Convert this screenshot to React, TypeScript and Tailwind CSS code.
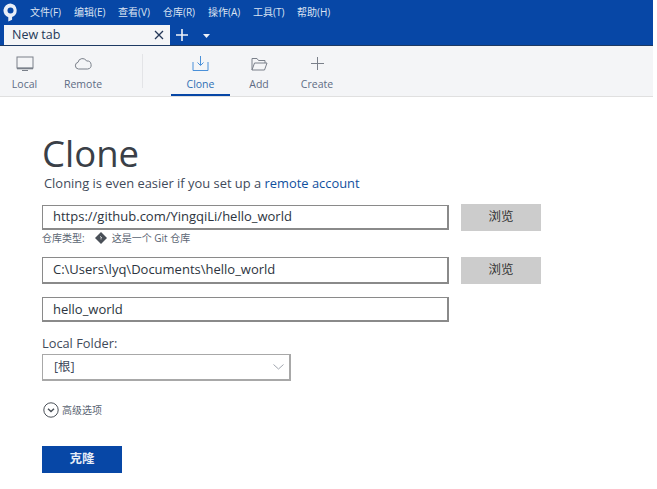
import React from "react";

const cjk = "font-['Open_Sans','Noto_Sans_CJK_SC',sans-serif]";
const menus = [
  ["文件(F)", "w-[44px]"],
  ["编辑(E)", "w-[44px]"],
  ["查看(V)", "w-[45px]"],
  ["仓库(R)", "w-[45px]"],
  ["操作(A)", "w-[45px]"],
  ["工具(T)", "w-[44px]"],
  ["帮助(H)", "w-[40px]"],
];

function ToolItem({ label, icon, w, active }: { label: string; icon: React.ReactNode; w: string; active?: boolean }) {
  return (
    <div className={`${w} h-[50px] flex flex-col items-center relative pt-[7px] ${active ? "border-b-2 border-[#0747a6]" : ""}`}>
      <div className="h-[21px] flex items-center justify-center">{icon}</div>
      <div className={`text-[10.5px] leading-[14px] mt-[3px] ${active ? "text-[#2f6fb5]" : "text-[#5e6c84]"}`}>{label}</div>
    </div>
  );
}

function Field({ value, h, extra }: { value: string; h: string; extra?: string }) {
  return (
    <div className={`w-[407px] ${h} ${extra ?? ""} border border-[#8a8a8a] border-b-2 border-r-2 bg-white flex items-center pl-[10px] text-[13px] text-[#2c3440]`}>
      {value}
    </div>
  );
}

function Browse() {
  return (
    <div className="w-[80px] h-[27px] bg-[#cccccc] flex items-center justify-center text-[12.5px] text-[#333333]">浏览</div>
  );
}

export default function App() {
  return (
    <div className={`w-[653px] h-[489px] bg-white ${cjk} overflow-hidden`}>
      <div className="h-[46px] bg-[#0747a6] flex flex-col border-b border-[#1d3a63]">
        <div className="h-[26px] flex items-center">
          <div className="w-[30px] flex justify-center pr-[9px] pb-[1px]">
            <svg width="15" height="19" viewBox="0 0 15 19" className="shrink-0">
              <path d="M7.500 0.500a7 7 0 0 0-2.200 13.650V18.500l3.800-1.700v-2.800A7 7 0 0 0 7.500 0.500z" fill="#e8eef7" />
              <circle cx="7.500" cy="7.500" r="3" fill="#0747a6" />
            </svg>
          </div>
          {menus.map(([m, w]) => (
            <div key={m} className={`${w} text-[10px] text-[#dbe4f2] whitespace-nowrap`}>{m}</div>
          ))}
        </div>
        <div className="h-[20px] flex items-end">
          <div className="ml-[4px] w-[166px] h-[20px] bg-[#f4f5f7] flex items-center justify-between pl-[8px] pr-[6px] text-[12.5px] text-[#253858]">
            <span>New tab</span>
            <svg width="10" height="10" viewBox="0 0 10 10" stroke="#253858" strokeWidth="1.3"><path d="M1 1l8 8M9 1l-8 8" /></svg>
          </div>
          <div className="w-[24px] h-[20px] flex items-center justify-center">
            <svg width="12" height="12" viewBox="0 0 12 12" stroke="#eef2f8" strokeWidth="1.6"><path d="M6 0v12M0 6h12" /></svg>
          </div>
          <div className="w-[24px] h-[20px] flex items-center justify-center pt-[2px]">
            <svg width="7" height="4" viewBox="0 0 7 4" fill="#eef2f8"><path d="M0 0h7L3.500 4z" /></svg>
          </div>
        </div>
      </div>

      <div className="h-[51px] bg-[#f4f5f7] border-b border-[#e0e0e0] flex items-start pl-[4px]">
        <ToolItem label="Local" w="w-[41px]" icon={
          <svg width="18" height="16" viewBox="0 0 18 16" fill="none" stroke="#7a808a" strokeWidth="1"><rect x="1" y="1" width="16" height="11" /><path d="M1 12.500h16" strokeWidth="1.600" /><path d="M6 14.500h6" /></svg>
        } />
        <ToolItem label="Remote" w="w-[76px]" icon={
          <svg width="18" height="13" viewBox="0 0 18 13" fill="none" stroke="#7a808a" strokeWidth="1"><path d="M4.500 12a3.400 3.400 0 0 1-.5-6.700A4.600 4.600 0 0 1 12.600 4 4 4 0 0 1 13.600 12z" /></svg>
        } />
        <div className="w-px h-[34px] bg-[#e3e4e7] ml-[21px] mt-[8px] mr-[28px]" />
        <ToolItem active label="Clone" w="w-[59px]" icon={
          <svg width="17" height="17" viewBox="0 0 17 17" fill="none" stroke="#4a90d9" strokeWidth="1"><path d="M8.500 1v9M5.500 7.500l3 3 3-3" /><path d="M1 7v8.500h15V7" /></svg>
        } />
        <ToolItem label="Add" w="w-[58px]" icon={
          <svg width="17" height="14" viewBox="0 0 17 14" fill="none" stroke="#7a808a" strokeWidth="1"><path d="M1 13V1.500h5l1.500 2H14V6" /><path d="M1 13l2.500-7H16l-2.500 7z" /></svg>
        } />
        <ToolItem label="Create" w="w-[58px]" icon={
          <svg width="13" height="13" viewBox="0 0 13 13" stroke="#7a808a" strokeWidth="1"><path d="M6.500 0v13M0 6.500h13" /></svg>
        } />
      </div>

      <div className="pl-[42px] flex flex-col items-start">
        <div className="text-[36.500px] leading-[50px] mt-[31px] text-[#3a3f47]">Clone</div>
        <div className="text-[12.900px] leading-[18px] ml-[2px] mt-[-4px] text-[#3f4a5a]">
          Cloning is even easier if you set up a <span className="text-[#0f4f9e]">remote account</span>
        </div>
        <div className="flex items-start gap-[12px] mt-[12px]">
          <Field value="https://github.com/YingqiLi/hello_world" h="h-[25px]" extra="mt-[1px]" />
          <Browse />
        </div>
        <div className="flex items-center text-[10px] leading-[14px] text-[#5a6472] mt-[-2px] h-[18px]">
          <span>仓库类型:</span>
          <svg className="ml-[10px] mr-[5px]" width="12" height="12" viewBox="0 0 12 12"><path d="M6 0l6 6-6 6-6-6z" fill="#4a5058" /><path d="M5 4l2 2M6 5v2.500" stroke="#fff" strokeWidth=".6" /></svg>
          <span>这是一个 Git 仓库</span>
        </div>
        <div className="flex gap-[12px] mt-[10px]">
          <Field value="C:\Users\lyq\Documents\hello_world" h="h-[27px]" />
          <Browse />
        </div>
        <div className="mt-[13px]">
          <Field value="hello_world" h="h-[25px]" extra="pt-[1px]" />
        </div>
        <div className="text-[12.800px] leading-[16px] text-[#3f4a5a] mt-[13px]">Local Folder:</div>
        <div className="mt-[3px] w-[249px] h-[27px] border border-[#a8a8a8] border-b-2 border-r-2 flex items-center justify-between pl-[11px] pr-[5px] text-[12.500px] text-[#3f4a5a]">
          <span>[根]</span>
          <svg width="11" height="6" viewBox="0 0 11 6" fill="none" stroke="#a0a6ae" strokeWidth="1"><path d="M0.500 0.500L5.500 5l5-4.500" /></svg>
        </div>
        <div className="flex items-center mt-[20px] h-[18px] text-[10px] text-[#5a6472] ml-[1px]">
          <svg className="mr-[3px]" width="16" height="16" viewBox="0 0 16 16" fill="none" stroke="#4a5058"><circle cx="8" cy="8" r="7.200" /><path d="M5 6.800l3 2.700 3-2.700" strokeWidth="1.500" /></svg>
          <span>高级选项</span>
        </div>
        <div className="mt-[27px] w-[80px] h-[27px] bg-[#0747a6] flex items-center justify-center text-[12.500px] font-bold text-[#e6edf7]">克隆</div>
      </div>
    </div>
  );
}
